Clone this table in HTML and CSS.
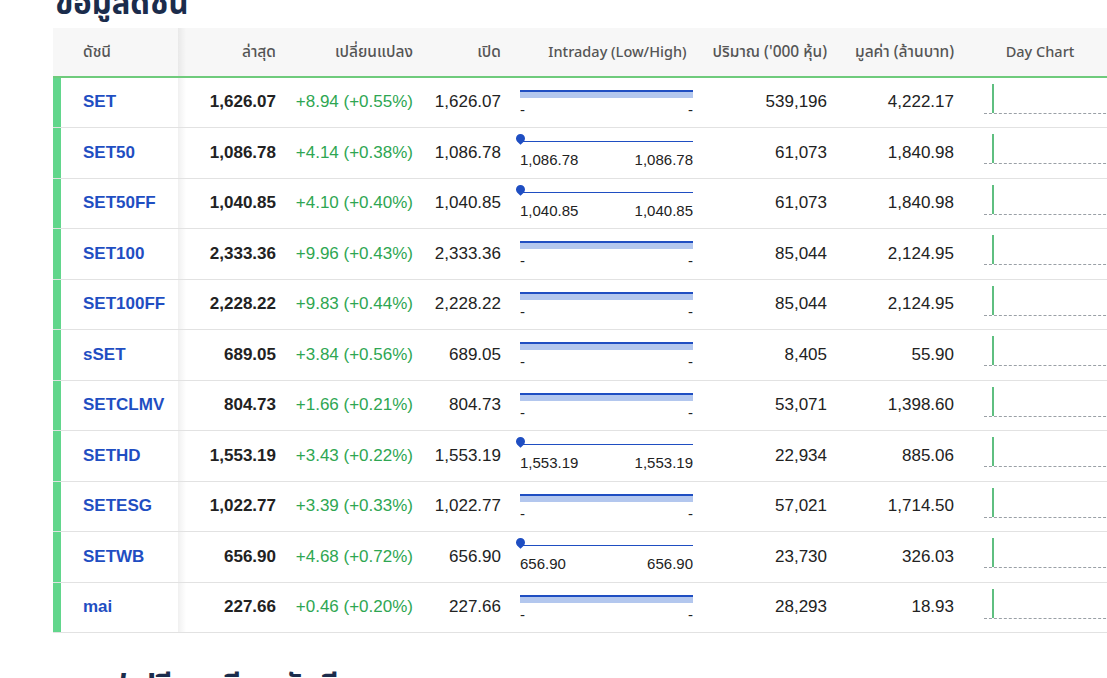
FILE: index.html
```html
<!DOCTYPE html>
<html lang="th">
<head>
<meta charset="utf-8">
<title>ข้อมูลดัชนี</title>
<link rel="stylesheet" href="styles.css">
</head>
<body>
<main class="page">
  <h2 class="title">ข้อมูลดัชนี</h2>
  <div class="table">
    <div class="row head">
      <div class="cell c-name">ดัชนี</div>
      <div class="cell num">ล่าสุด</div>
      <div class="cell num">เปลี่ยนแปลง</div>
      <div class="cell num">เปิด</div>
      <div class="cell center en intra-head">Intraday (Low/High)</div>
      <div class="cell num">ปริมาณ ('000 หุ้น)</div>
      <div class="cell num">มูลค่า (ล้านบาท)</div>
      <div class="cell center en">Day Chart</div>
    </div>

    <div class="row">
      <div class="cell c-name"><a class="sym">SET</a></div>
      <div class="cell num last">1,626.07</div>
      <div class="cell num up">+8.94 (+0.55%)</div>
      <div class="cell num">1,626.07</div>
      <div class="cell intra"><div class="bar band"></div><div class="lbl"><span>-</span><span>-</span></div></div>
      <div class="cell num">539,196</div>
      <div class="cell num">4,222.17</div>
      <div class="cell chart"><div class="spark"></div></div>
    </div>

    <div class="row">
      <div class="cell c-name"><a class="sym">SET50</a></div>
      <div class="cell num last">1,086.78</div>
      <div class="cell num up">+4.14 (+0.38%)</div>
      <div class="cell num">1,086.78</div>
      <div class="cell intra"><div class="bar dot"><i class="pin"></i></div><div class="lbl"><span>1,086.78</span><span>1,086.78</span></div></div>
      <div class="cell num">61,073</div>
      <div class="cell num">1,840.98</div>
      <div class="cell chart"><div class="spark"></div></div>
    </div>

    <div class="row">
      <div class="cell c-name"><a class="sym">SET50FF</a></div>
      <div class="cell num last">1,040.85</div>
      <div class="cell num up">+4.10 (+0.40%)</div>
      <div class="cell num">1,040.85</div>
      <div class="cell intra"><div class="bar dot"><i class="pin"></i></div><div class="lbl"><span>1,040.85</span><span>1,040.85</span></div></div>
      <div class="cell num">61,073</div>
      <div class="cell num">1,840.98</div>
      <div class="cell chart"><div class="spark"></div></div>
    </div>

    <div class="row">
      <div class="cell c-name"><a class="sym">SET100</a></div>
      <div class="cell num last">2,333.36</div>
      <div class="cell num up">+9.96 (+0.43%)</div>
      <div class="cell num">2,333.36</div>
      <div class="cell intra"><div class="bar band"></div><div class="lbl"><span>-</span><span>-</span></div></div>
      <div class="cell num">85,044</div>
      <div class="cell num">2,124.95</div>
      <div class="cell chart"><div class="spark"></div></div>
    </div>

    <div class="row">
      <div class="cell c-name"><a class="sym">SET100FF</a></div>
      <div class="cell num last">2,228.22</div>
      <div class="cell num up">+9.83 (+0.44%)</div>
      <div class="cell num">2,228.22</div>
      <div class="cell intra"><div class="bar band"></div><div class="lbl"><span>-</span><span>-</span></div></div>
      <div class="cell num">85,044</div>
      <div class="cell num">2,124.95</div>
      <div class="cell chart"><div class="spark"></div></div>
    </div>

    <div class="row">
      <div class="cell c-name"><a class="sym">sSET</a></div>
      <div class="cell num last">689.05</div>
      <div class="cell num up">+3.84 (+0.56%)</div>
      <div class="cell num">689.05</div>
      <div class="cell intra"><div class="bar band"></div><div class="lbl"><span>-</span><span>-</span></div></div>
      <div class="cell num">8,405</div>
      <div class="cell num">55.90</div>
      <div class="cell chart"><div class="spark"></div></div>
    </div>

    <div class="row">
      <div class="cell c-name"><a class="sym">SETCLMV</a></div>
      <div class="cell num last">804.73</div>
      <div class="cell num up">+1.66 (+0.21%)</div>
      <div class="cell num">804.73</div>
      <div class="cell intra"><div class="bar band"></div><div class="lbl"><span>-</span><span>-</span></div></div>
      <div class="cell num">53,071</div>
      <div class="cell num">1,398.60</div>
      <div class="cell chart"><div class="spark"></div></div>
    </div>

    <div class="row">
      <div class="cell c-name"><a class="sym">SETHD</a></div>
      <div class="cell num last">1,553.19</div>
      <div class="cell num up">+3.43 (+0.22%)</div>
      <div class="cell num">1,553.19</div>
      <div class="cell intra"><div class="bar dot"><i class="pin"></i></div><div class="lbl"><span>1,553.19</span><span>1,553.19</span></div></div>
      <div class="cell num">22,934</div>
      <div class="cell num">885.06</div>
      <div class="cell chart"><div class="spark"></div></div>
    </div>

    <div class="row">
      <div class="cell c-name"><a class="sym">SETESG</a></div>
      <div class="cell num last">1,022.77</div>
      <div class="cell num up">+3.39 (+0.33%)</div>
      <div class="cell num">1,022.77</div>
      <div class="cell intra"><div class="bar band"></div><div class="lbl"><span>-</span><span>-</span></div></div>
      <div class="cell num">57,021</div>
      <div class="cell num">1,714.50</div>
      <div class="cell chart"><div class="spark"></div></div>
    </div>

    <div class="row">
      <div class="cell c-name"><a class="sym">SETWB</a></div>
      <div class="cell num last">656.90</div>
      <div class="cell num up">+4.68 (+0.72%)</div>
      <div class="cell num">656.90</div>
      <div class="cell intra"><div class="bar dot"><i class="pin"></i></div><div class="lbl"><span>656.90</span><span>656.90</span></div></div>
      <div class="cell num">23,730</div>
      <div class="cell num">326.03</div>
      <div class="cell chart"><div class="spark"></div></div>
    </div>

    <div class="row">
      <div class="cell c-name"><a class="sym">mai</a></div>
      <div class="cell num last">227.66</div>
      <div class="cell num up">+0.46 (+0.20%)</div>
      <div class="cell num">227.66</div>
      <div class="cell intra"><div class="bar band"></div><div class="lbl"><span>-</span><span>-</span></div></div>
      <div class="cell num">28,293</div>
      <div class="cell num">18.93</div>
      <div class="cell chart"><div class="spark"></div></div>
    </div>
  </div>
  <h2 class="title next">กราฟเปรียบเทียบดัชนี</h2>
</main>
</body>
</html>
```

FILE: styles.css
```css
html, body {
  margin: 0;
  padding: 0;
  background: #ffffff;
}
body {
  width: 1107px;
  height: 678px;
  overflow: hidden;
  font-family: "Liberation Sans", Arial, "Noto Sans Thai", sans-serif;
  color: #222222;
}
.page {
  padding-left: 53px;
}
.title {
  margin: -20px 0 0 2px;
  height: 47.5px;
  font-family: "Noto Sans Thai", "Noto Sans", sans-serif;
  font-size: 31px;
  font-weight: 700;
  line-height: 50px;
  color: #1b2c4c;
}
.title.next {
  margin: 30px 0 0 2px;
}
.table {
  width: 1063px;
}
.row {
  display: grid;
  grid-template-columns: 125px 108px 137px 88px 191px 135px 127px 152px;
  height: 50.5px;
  box-sizing: border-box;
  border-bottom: 1px solid #e2e2e2;
  align-items: center;
}
.row.head {
  height: 50px;
  background: #f7f7f7;
  border-bottom: 2px solid #6fcb7c;
  font-family: "Noto Sans Thai", "Noto Sans", sans-serif;
  font-weight: 500;
  color: #555555;
}
.cell {
  height: 100%;
  display: flex;
  align-items: center;
  box-sizing: border-box;
  white-space: nowrap;
  font-size: 17px;
}
.head .cell {
  font-size: 15.5px;
  padding-top: 2px;
}
.head .cell.en {
  font-size: 14.5px;
}
.head .intra-head {
  padding-left: 22px;
}
.c-name {
  position: relative;
  padding-left: 22px;
  border-left: 8px solid #62d68c;
}
.head .c-name {
  border-left: 0;
  padding-left: 30px;
}
.c-name::after {
  content: "";
  position: absolute;
  top: 0;
  bottom: 0;
  right: -8px;
  width: 8px;
  background: linear-gradient(to right, rgba(0, 0, 0, 0.06), rgba(0, 0, 0, 0));
}
.num {
  justify-content: flex-end;
  padding-right: 10px;
}
.center {
  justify-content: center;
}
.sym {
  font-weight: 700;
  color: #1f4ec2;
}
.last {
  font-weight: 700;
}
.up {
  color: #2ea652;
}
.intra {
  flex-direction: column;
  align-items: stretch;
  justify-content: flex-start;
  padding: 12px 9px 0 9px;
}
.bar {
  position: relative;
  height: 8px;
}
.bar.band {
  box-sizing: border-box;
  border-top: 2px solid #1f4ec2;
  background: #b3c7ee;
}
.bar.dot::before {
  content: "";
  position: absolute;
  left: 0;
  right: 0;
  top: 1px;
  height: 1px;
  background: #1f4ec2;
}
.pin {
  position: absolute;
  left: -4px;
  top: -6px;
  width: 9px;
  height: 9px;
  background: #1f4ec2;
  border-radius: 50% 50% 0 50%;
  transform: rotate(45deg);
}
.lbl {
  display: flex;
  justify-content: space-between;
  margin-top: 1px;
  font-size: 15px;
  line-height: 22px;
  color: #222222;
}
.chart {
  align-items: flex-start;
  padding: 6px 0 0 20px;
}
.spark {
  position: relative;
  width: 140px;
  height: 29px;
  border-bottom: 1px dashed #9aa0a6;
}
.spark::before {
  content: "";
  position: absolute;
  left: 8px;
  top: 0;
  bottom: 0;
  width: 2px;
  background: #5fbf80;
}
```
